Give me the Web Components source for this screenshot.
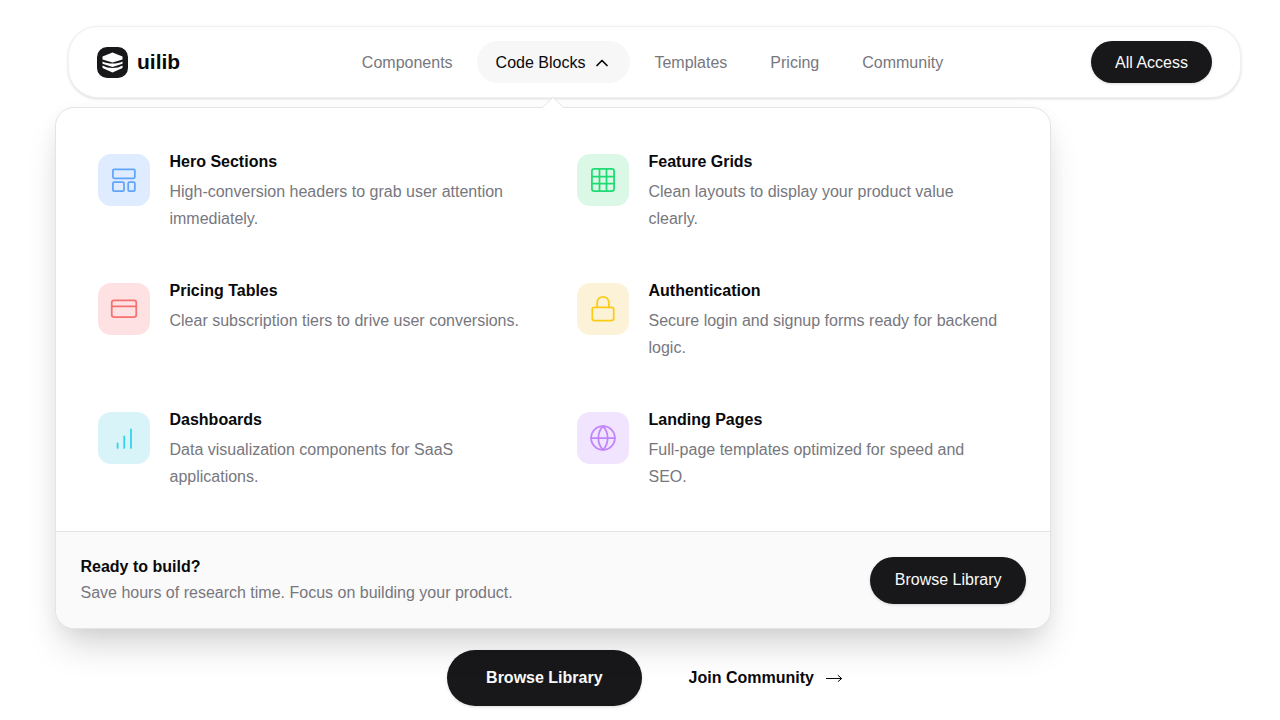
<!DOCTYPE html>
<html lang="en">
<head>
<meta charset="utf-8">
<meta name="viewport" content="width=device-width, initial-scale=1">
<title>uilib</title>
<style>
  body {
    margin: 0;
    background: #fff;
    color: #09090b;
    font: 16px/24px "Liberation Sans", Arial, sans-serif;
    --dark: #18181b;
    --muted: #77777e;
    --line: #e4e4e7;
  }
</style>
</head>
<body>
<ui-page></ui-page>

<script>
const ICONS = {
  layout: `<rect x="2.5" y="2.8" width="18.800" height="7.700" rx="1"/><rect x="2.5" y="13.800" width="9.500" height="7.700" rx="1"/><rect x="15.600" y="13.800" width="5.700" height="7.700" rx="1"/>`,
  grid: `<rect x="2.5" y="2.5" width="19" height="19" rx="2"/><path d="M2.5 9h19M2.5 15h19M9 2.5v19M15 2.5v19"/>`,
  card: `<rect x="1.5" y="4.5" width="21" height="14.5" rx="2"/><path d="M1.5 9.8h21"/>`,
  lock: `<rect x="2.8" y="10.500" width="18.4" height="11.500" rx="2"/><path d="M7 10.500V6.500a5 5 0 0 1 10 0v4"/>`,
  bars: `<path d="M6.5 20.5v-4M12.2 20.5v-10M18 20.5v-16"/>`,
  globe: `<circle cx="12" cy="12" r="10.200"/><path d="M1.800 12h20.400M12 1.800c-5.3 5.500-5.3 14.900 0 20.400M12 1.800c5.300 5.500 5.300 14.900 0 20.400"/>`,
};

class UiLogo extends HTMLElement {
  constructor() {
    super();
    this.attachShadow({ mode: "open" });
  }

  connectedCallback() {
    this.shadowRoot.innerHTML = `
      <style>
        :host { display: flex; }
        a {
          display: flex;
          align-items: center;
          gap: 9px;
          color: #09090b;
          font-size: 21px;
          font-weight: 700;
          text-decoration: none;
        }
        svg { display: block; width: 31px; height: 31px; }
      </style>
      <a href="#">
        <svg viewBox="0 0 31 31" aria-hidden="true">
          <rect width="31" height="31" rx="10" fill="#18181b"/>
          <g fill="#fff">
            <path d="M15.500 5.500 25.500 9.500v3L15.500 15.500 5.500 12.500V9.500Z"/>
            <path d="M5.500 14.500c3 1.400 6 2 10 2s7-.6 10-2v2.200l-10 3.300-10-3.300Z"/>
            <path d="M5.500 18.500c3 1.700 6 2.500 10 2.500s7-.8 10-2.500v2.500l-10 4.600-10-4.600Z"/>
          </g>
        </svg>
        <slot></slot>
      </a>
    `;
  }
}

class UiButton extends HTMLElement {
  constructor() {
    super();
    this.attachShadow({ mode: "open" });
  }

  connectedCallback() {
    this.shadowRoot.innerHTML = `
      <style>
        :host { display: block; }
        button {
          display: block;
          border: 0;
          border-radius: 28px;
          padding: 10px 24px 8px;
          background: var(--dark);
          color: #fafafa;
          font: inherit;
          white-space: nowrap;
          cursor: pointer;
          box-shadow: 0 1px 3px rgba(0, 0, 0, 0.14);
        }
        :host([size="md"]) button { padding: 11px 25px 12px; }
        :host([size="lg"]) button { padding: 16px 39px; font-weight: 700; }
        button:hover { background: #27272a; }
      </style>
      <button type="button"><slot></slot></button>
    `;
  }
}

class UiNavItem extends HTMLElement {
  constructor() {
    super();
    this.attachShadow({ mode: "open" });
  }

  connectedCallback() {
    const open = this.hasAttribute("open");
    const label = open
      ? `<button type="button" aria-expanded="true"><slot></slot>
          <svg viewBox="0 0 12 8" aria-hidden="true"><path d="m1 6.500 5-5 5 5"/></svg>
        </button>
        <div class="popover"><slot name="menu"></slot></div>`
      : `<a href="#"><slot></slot></a>`;

    this.shadowRoot.innerHTML = `
      <style>
        :host { display: block; position: relative; }
        a, button {
          display: flex;
          align-items: center;
          gap: 11px;
          border: 0;
          border-radius: 21px;
          padding: 10px 19px 8px;
          background: none;
          color: var(--muted);
          font: inherit;
          text-decoration: none;
          white-space: nowrap;
        }
        button { padding-right: 22px; background: #f7f7f7; color: #09090b; }
        svg {
          width: 12px;
          height: 8px;
          fill: none;
          stroke: currentColor;
          stroke-width: 1.700;
          stroke-linecap: round;
          stroke-linejoin: round;
        }
        .popover {
          position: absolute;
          top: calc(100% + 24px);
          left: 50%;
          transform: translateX(-50%);
          z-index: 10;
        }
      </style>
      ${label}
    `;
  }
}

class UiHeader extends HTMLElement {
  constructor() {
    super();
    this.attachShadow({ mode: "open" });
  }

  connectedCallback() {
    this.shadowRoot.innerHTML = `
      <style>
        :host { display: block; }
        header {
          display: grid;
          grid-template-columns: 1fr auto 1fr;
          align-items: center;
          border: 1px solid #f1f1f2;
          border-radius: 30px;
          padding: 14px 28px;
          background: #fff;
          box-shadow: 0 1px 3px rgba(0, 0, 0, 0.14);
        }
        nav { display: flex; gap: 5px; margin-right: 4px; }
        .end { justify-self: end; }
      </style>
      <header>
        <slot name="logo"></slot>
        <nav><slot></slot></nav>
        <div class="end"><slot name="action"></slot></div>
      </header>
    `;
  }
}

class UiMenuItem extends HTMLElement {
  constructor() {
    super();
    this.attachShadow({ mode: "open" });
  }

  connectedCallback() {
    this.shadowRoot.innerHTML = `
      <style>
        :host { display: block; }
        a {
          display: flex;
          gap: 19px;
          padding: 18px 24px 18px 18px;
          color: inherit;
          text-decoration: none;
        }
        .icon {
          flex: none;
          display: grid;
          place-items: center;
          width: 52px;
          height: 52px;
          margin-top: 4px;
          border-radius: 13px;
          background: var(--tint);
          color: var(--tone);
        }
        svg {
          width: 28px;
          height: 28px;
          fill: none;
          stroke: currentColor;
          stroke-width: 1.500;
          stroke-linecap: round;
          stroke-linejoin: round;
        }
        strong { display: block; margin-bottom: 4px; }
        p { margin: 0; color: var(--muted); line-height: 27px; }
      </style>
      <a href="#">
        <span class="icon">
          <svg viewBox="0 0 24 24" aria-hidden="true">${ICONS[this.getAttribute("icon")]}</svg>
        </span>
        <div>
          <strong><slot name="title"></slot></strong>
          <p><slot></slot></p>
        </div>
      </a>
    `;
  }
}

class UiMegaMenu extends HTMLElement {
  constructor() {
    super();
    this.attachShadow({ mode: "open" });
  }

  connectedCallback() {
    this.shadowRoot.innerHTML = `
      <style>
        :host {
          display: block;
          box-sizing: border-box;
          width: min(996px, 92vw);
          border: 1px solid var(--line);
          border-radius: 19px;
          background: #fff;
          box-shadow: 0 22px 36px -8px rgba(0, 0, 0, 0.18), 0 4px 18px rgba(0, 0, 0, 0.04);
        }
        .caret {
          position: absolute;
          top: -10px;
          left: calc(50% - 11px);
          display: block;
          width: 22px;
          height: 11px;
        }
        .items {
          display: grid;
          grid-template-columns: 1fr 1fr;
          gap: 11px 12px;
          padding: 24px 24px 23px;
        }
        footer {
          display: flex;
          align-items: center;
          justify-content: space-between;
          border-top: 1px solid var(--line);
          border-radius: 0 0 18px 18px;
          padding: 22px 24px;
          background: #fafafa;
        }
        strong, p { display: block; margin: 0; line-height: 26px; }
        p { color: var(--muted); }
      </style>
      <svg class="caret" viewBox="0 0 22 11" aria-hidden="true">
        <path d="M0 11 11 .5 22 11" fill="#fff"/>
        <path d="M.5 10.500 11 .5 21.500 10.500" fill="none" stroke="#e4e4e7"/>
      </svg>
      <div class="items"><slot></slot></div>
      <footer>
        <div>
          <strong>Ready to build?</strong>
          <p>Save hours of research time. Focus on building your product.</p>
        </div>
        <ui-button size="md">Browse Library</ui-button>
      </footer>
    `;
  }
}

class UiHero extends HTMLElement {
  constructor() {
    super();
    this.attachShadow({ mode: "open" });
  }

  connectedCallback() {
    this.shadowRoot.innerHTML = `
      <style>
        :host {
          display: flex;
          flex-direction: column;
          justify-content: flex-end;
          padding-bottom: 14px;
        }
        .actions {
          display: flex;
          align-items: center;
          justify-content: center;
          gap: 28px;
        }
        a {
          display: flex;
          align-items: center;
          gap: 11px;
          padding: 16px 19px;
          color: inherit;
          font-weight: 700;
          text-decoration: none;
        }
        svg {
          width: 18px;
          height: 8px;
          fill: none;
          stroke: currentColor;
        }
      </style>
      <div class="actions">
        <ui-button size="lg">Browse Library</ui-button>
        <a href="#">Join Community
          <svg viewBox="0 0 18 8" aria-hidden="true">
            <path d="M1 4.500h15.500M12.800 1.200l3.900 3.300-3.900 3.300"/>
          </svg>
        </a>
      </div>
    `;
  }
}

class UiPage extends HTMLElement {
  constructor() {
    super();
    this.attachShadow({ mode: "open" });
  }

  connectedCallback() {
    this.shadowRoot.innerHTML = `
      <style>
        :host {
          display: flex;
          flex-direction: column;
          box-sizing: border-box;
          min-height: 100vh;
          padding: 26px 39px 0 68px;
        }
        ui-hero { flex: 1; position: relative; z-index: 1; }
        ui-header { position: relative; z-index: 2; }
      </style>
      <ui-header>
        <ui-logo slot="logo">uilib</ui-logo>
        <ui-nav-item>Components</ui-nav-item>
        <ui-nav-item open>
          Code Blocks
          <ui-mega-menu slot="menu">
            <ui-menu-item icon="layout" style="--tint: #dfebfe; --tone: #60a5fa">
              <span slot="title">Hero Sections</span>
              High-conversion headers to grab user attention immediately.
            </ui-menu-item>
            <ui-menu-item icon="grid" style="--tint: #dbf7e6; --tone: #1fdb74">
              <span slot="title">Feature Grids</span>
              Clean layouts to display your product value clearly.
            </ui-menu-item>
            <ui-menu-item icon="card" style="--tint: #fee1e2; --tone: #f87171">
              <span slot="title">Pricing Tables</span>
              Clear subscription tiers to drive user conversions.
            </ui-menu-item>
            <ui-menu-item icon="lock" style="--tint: #fcf2d8; --tone: #facc15">
              <span slot="title">Authentication</span>
              Secure login and signup forms ready for backend logic.
            </ui-menu-item>
            <ui-menu-item icon="bars" style="--tint: #d9f4f9; --tone: #2dd4ea">
              <span slot="title">Dashboards</span>
              Data visualization components for SaaS applications.
            </ui-menu-item>
            <ui-menu-item icon="globe" style="--tint: #f1e4fe; --tone: #c084fc">
              <span slot="title">Landing Pages</span>
              Full-page templates optimized for speed and SEO.
            </ui-menu-item>
          </ui-mega-menu>
        </ui-nav-item>
        <ui-nav-item>Templates</ui-nav-item>
        <ui-nav-item>Pricing</ui-nav-item>
        <ui-nav-item>Community</ui-nav-item>
        <ui-button slot="action">All Access</ui-button>
      </ui-header>
      <ui-hero></ui-hero>
    `;
  }
}

customElements.define("ui-logo", UiLogo);
customElements.define("ui-button", UiButton);
customElements.define("ui-nav-item", UiNavItem);
customElements.define("ui-header", UiHeader);
customElements.define("ui-menu-item", UiMenuItem);
customElements.define("ui-mega-menu", UiMegaMenu);
customElements.define("ui-hero", UiHero);
customElements.define("ui-page", UiPage);
</script>
</body>
</html>
